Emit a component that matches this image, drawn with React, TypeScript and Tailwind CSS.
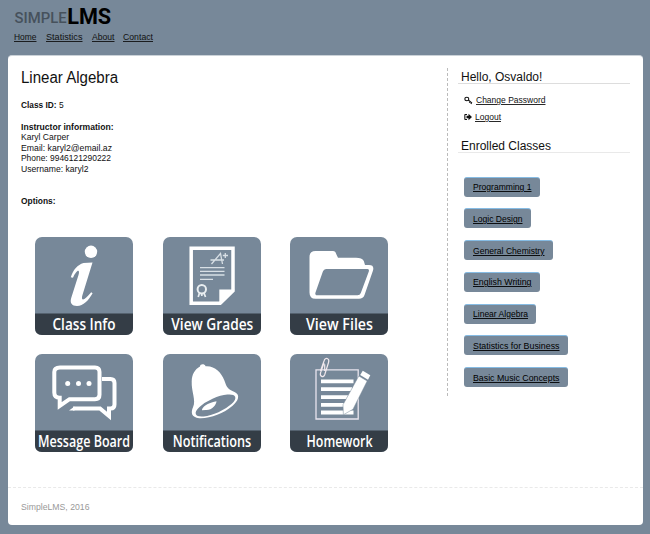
import type { ReactNode } from 'react';

const links = [
  { name: 'Home', slot: 'w-[32px]', text: 22.5 },
  { name: 'Statistics', slot: 'w-[45.5px]', text: 36.5 },
  { name: 'About', slot: 'w-[31.5px]', text: 22.5 },
  { name: 'Contact', slot: 'w-[40px]', text: 30 },
];

const classes = [
  { name: 'Programming 1', width: 'w-[76px]', text: 58.5 },
  { name: 'Logic Design', width: 'w-[67px]', text: 49.5 },
  { name: 'General Chemistry', width: 'w-[89px]', text: 71.5 },
  { name: 'English Writing', width: 'w-[76px]', text: 58.5 },
  { name: 'Linear Algebra', width: 'w-[72px]', text: 55 },
  { name: 'Statistics for Business', width: 'w-[104px]', text: 86.5 },
  { name: 'Basic Music Concepts', width: 'w-[104px]', text: 86.5 },
];

function Tile({ label, x, width, children }: { label: string; x: number; width: number; children: ReactNode }) {
  return (
    <svg viewBox="0 0 98 98" className="block h-[98px] w-[98px] overflow-visible">
      <rect width="98" height="98" rx="7" fill="#778899" />
      {children}
      <path d="M0 76.5H98V91Q98 98 91 98H7Q0 98 0 91Z" fill="#343d46" />
      <text
        x={x}
        y="92.7"
        textLength={width}
        lengthAdjust="spacingAndGlyphs"
        fill="#fff"
        className="font-['Open_Sans',sans-serif] text-[17px] font-semibold"
      >
        {label}
      </text>
    </svg>
  );
}

function InfoIcon() {
  return (
    <g fill="#fff">
      <circle cx="56" cy="14.8" r="6.2" />
      <path d="M35.8 40.2C38.3 32.5 42.5 28 48.5 26L57.5 25.5L47.4 58.2C46.3 62 47.4 63.3 49.4 62C52 60.2 54.2 57.5 56.2 55.3L57.6 56.3C53.6 63.5 48.3 68.9 42 69C36.8 69 34.7 65.9 36.2 61L43.5 38.1C45.3 32.3 42.1 31.5 38 40.8Z" />
    </g>
  );
}

function GradesIcon() {
  return (
    <g fill="none" stroke="#fff">
      <path d="M28.2 11.2H70V53.8L57.2 66.2H28.2Z" strokeWidth="3.5" />
      <path d="M56.3 68V52.6H71.5L56.8 67.5Z" fill="#fff" stroke="none" />
      <path d="M37 30.7H61.5M37 34.3H61.5M37 38H61.5M37 42.4H50" stroke="#d8dfe5" strokeWidth="1.3" />
      <path d="M48.5 27L57.5 16.5L59.5 27M47.5 23H61M62.3 16V21M59.8 18.5H65" stroke="#d8dfe5" strokeWidth="1.3" />
      <circle cx="38.8" cy="52.3" r="4.2" stroke="#e9eef1" strokeWidth="2" />
      <path d="M36.5 56L35.2 60M41 56L42.5 60M38.8 57V59" stroke="#e9eef1" strokeWidth="1.7" />
    </g>
  );
}

function FilesIcon() {
  return (
    <g>
      <path fill="#fff" d="M25.5 14H43Q45.5 14 46.2 17L48 20.7H66Q72 20.7 73.8 24L75 28H79Q84.5 28 83 33.5L74.5 58Q73.2 61.8 69 61.8H25.5Q19.5 61.8 19.5 55.5V20Q19.5 14 25.5 14Z" />
      <path fill="#778899" d="M36.5 32H77.5Q79.5 32 78.8 34.5L70.8 56Q70 58.2 67.5 58.2H27.5Q24.5 58.2 25.5 55.4L32.7 35Q33.8 32 36.5 32Z" />
    </g>
  );
}

function MessageIcon() {
  return (
    <g fill="none" stroke="#fff" strokeWidth="4">
      <path d="M67 25H75.5Q79.5 25 79.5 29V50.5Q79.5 54.5 75.5 54.5H74V62L65 54.5H38" />
      <path d="M25 13.5H60Q64.5 13.5 64.5 18V40.8Q64.5 45.2 60 45.2H34.5L24.7 52V43.7Q19.3 43.7 19.3 38.5V18Q19.3 13.5 25 13.5Z" />
      <g fill="#fff" stroke="none">
        <path d="M34 56.5L39.5 52.5V56.5Z" />
        <circle cx="32.7" cy="29.6" r="2.5" />
        <circle cx="43.5" cy="29.6" r="2.5" />
        <circle cx="54" cy="29.6" r="2.5" />
      </g>
    </g>
  );
}

function BellIcon() {
  return (
    <g>
      <path fill="#fff" d="M37 12.5C37 10 41.3 9.2 42.6 12.2C51.8 11.5 58.2 18.2 61.3 26.3C64 34.1 64.4 34.7 72 38.3C77.5 41 75.4 47.1 69.3 52C60.6 59.5 46.5 64.8 36.2 64.2C28.3 63.5 27.6 58.8 30.1 53.1C33.2 46.2 28.3 37.5 28.7 27.4C28.9 20.4 31.7 15.4 37 12.5Z" />
      <ellipse cx="52.5" cy="51.5" rx="21.5" ry="7.3" transform="rotate(-24 52.5 51.5)" fill="#778899" />
      <path fill="#fff" d="M39 56.2C38.8 53.4 44.2 48.8 53.5 47.2C53.1 51.2 48.7 56.4 42.8 55.9Z" />
    </g>
  );
}

function HomeworkIcon() {
  return (
    <g fill="none" stroke="#fff">
      <path d="M26 15.8H68.2V65H26Z" stroke="#e8e4ee" strokeWidth="1.3" />
      <path d="M31 27.3H63.5M31 35.2H62M31 43.2H58M31 50.9H55M31 58.5H63.5" strokeWidth="3.8" />
      <path d="M30.5 17L34.2 6.5C35.3 2.9 39.7 4.2 38.6 8.3L34.7 20.7C33.4 24.2 29.3 22.3 30.6 18.6L34 8.7M34.7 10.3V17" stroke="#f2e9ee" strokeWidth="1.2" />
      <path d="M68.8 22L77.2 27L63 55.2L53.4 60.8L53 50.7Z" fill="#fff" stroke="#778899" strokeWidth=".5" />
      <path d="M72.8 16.8L80.3 21.2L78 25.8L70.2 21Z" fill="#fff" stroke="none" />
    </g>
  );
}

function Fit({ children, width, className = 'underline' }: { children: string; width: number; className?: string }) {
  return (
    <svg width={width} height="11" className="block overflow-visible">
      <text x="0" y="8" textLength={width} lengthAdjust="spacingAndGlyphs" fill="currentColor" className={className}>{children}</text>
    </svg>
  );
}

export default function App() {
  return (
    <div className="h-[534px] w-[650px] overflow-hidden bg-[#778899] px-2 font-['Liberation_Sans',Arial,sans-serif] text-[9px] leading-[10.6px] text-[#111]">
      <header className="h-[55px] pl-[6px] pt-1">
        <svg width="110" height="25" className="block font-['Roboto',sans-serif]">
          <text x=".6" y="19.3" textLength="52" lengthAdjust="spacingAndGlyphs" fill="#46515c" className="text-[14.5px] font-medium">SIMPLE</text>
          <text x="53.2" y="19.5" textLength="44" lengthAdjust="spacingAndGlyphs" fill="#000" className="text-[22px] font-bold">LMS</text>
        </svg>
        <nav className="flex pt-[3px]">
          {links.map(({ name, slot, text }) => (
            <a key={name} className={slot}>
              <Fit width={text}>{name}</Fit>
            </a>
          ))}
        </nav>
      </header>

      <div className="h-[470px] w-[635px] rounded-[4px] border-t border-[#cbd2d8] bg-white">
        <div className="flex h-[432px] border-b border-dashed border-[#e9e9e9] pt-3">
          <main className="w-[439px] pl-[13px]">
            <h1 className="h-[20px] pt-[7px]">
              <Fit width={97} className="text-[16px]">Linear Algebra</Fit>
            </h1>
            <div className="mt-[12px] flex h-[11px] gap-[2.5px]">
              <Fit width={35.5} className="font-bold">Class ID:</Fit>
              <Fit width={4.7} className="">5</Fit>
            </div>
            <div className="mt-[10.6px] flex flex-col">
              <div className="h-[10.6px]"><Fit width={92.5} className="font-bold">Instructor information:</Fit></div>
              <div className="h-[10.6px]"><Fit width={48} className="">Karyl Carper</Fit></div>
              <div className="h-[10.6px]"><Fit width={91} className="">Email: karyl2@email.az</Fit></div>
              <div className="h-[10.6px]"><Fit width={90} className="">Phone: 9946121290222</Fit></div>
              <div className="h-[10.6px]"><Fit width={67.5} className="">Username: karyl2</Fit></div>
            </div>
            <div className="mt-[21px] h-[10.6px]"><Fit width={34.5} className="font-bold">Options:</Fit></div>
            <div className="ml-[14px] mt-[30.8px] grid w-[353px] grid-cols-[98px_98px_98px] justify-between gap-y-[19px]">
              <Tile label="Class Info" x={17.5} width={63}><InfoIcon /></Tile>
              <Tile label="View Grades" x={8.3} width={82}><GradesIcon /></Tile>
              <Tile label="View Files" x={16} width={67}><FilesIcon /></Tile>
              <Tile label="Message Board" x={3} width={92}><MessageIcon /></Tile>
              <Tile label="Notifications" x={9.8} width={78.5}><BellIcon /></Tile>
              <Tile label="Homework" x={16.5} width={66}><HomeworkIcon /></Tile>
            </div>
          </main>

          <aside className="h-[328px] w-[183px] border-l border-dashed border-[#bbb] pl-[10px]">
            <h2 className="h-[15.5px] border-b border-[#ddd] pl-[3px] text-[12px] leading-[18px]">Hello, Osvaldo!</h2>
            <div className="mt-[11px] flex h-[11px] items-center pl-[6px]">
              <svg width="9" height="9" viewBox="0 0 9 9" className="mr-[2.5px]" fill="none" stroke="#111" strokeWidth="1.1">
                <ellipse cx="2.8" cy="3" rx="2" ry="1.8" />
                <path d="M4.3 4L8 7.2M6.2 5.6L5.2 6.7M7.6 6.9L6.8 7.9" />
              </svg>
              <Fit width={69.5}>Change Password</Fit>
            </div>
            <div className="mt-[6px] flex h-[11px] items-center pl-[6px]">
              <svg width="8" height="8" viewBox="0 0 8 8" className="mr-[2.5px]" fill="#111">
                <path d="M3 1H1.2Q.3 1 .3 2V6Q.3 7 1.2 7H3V6H1.4V2H3ZM2.5 2.7H4.5V.8L8 4L4.5 7.2V5.3H2.5Z" />
              </svg>
              <Fit width={26}>Logout</Fit>
            </div>
            <h2 className="mt-[14.5px] h-[16px] border-b border-[#e9e9e9] pl-[3px] text-[12px] leading-[18px]">Enrolled Classes</h2>
            <div className="mt-[23.5px] flex flex-col gap-[11.8px] pl-[6px]">
              {classes.map(({ name, width, text }) => (
                <a key={name} className={`${width} h-[20px] rounded-[3px] border-t border-[#86bce4] bg-[#778899] pl-[8.5px] pt-[4.5px] text-black`}>
                  <Fit width={text}>{name}</Fit>
                </a>
              ))}
            </div>
          </aside>
        </div>
        <footer className="pl-[13px] pt-[14px] text-[#999]">
          <Fit width={68.5} className="">SimpleLMS, 2016</Fit>
        </footer>
      </div>
    </div>
  );
}
